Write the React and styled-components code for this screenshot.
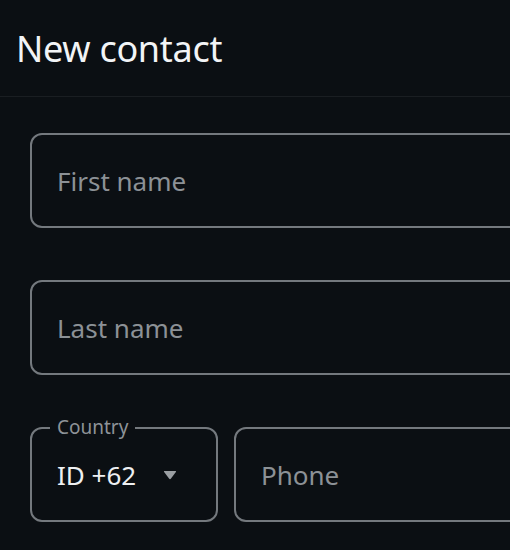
import styled, { createGlobalStyle } from "styled-components";

const GlobalStyle = createGlobalStyle`
  html, body {
    margin: 0;
    padding: 0;
    background: #0b0f13;
    overflow: hidden;
    font-family: "Noto Sans", "Open Sans", sans-serif;
  }
`;

export default function App() {
  return (
    <>
      <GlobalStyle />
      <Page>
        <Header>
          <Title>New contact</Title>
        </Header>
        <Form>
          <Field placeholder="First name" />
          <Field placeholder="Last name" />
          <PhoneRow>
            <Country>
              <CountryLabel>Country</CountryLabel>
              <CountryValue>ID +62</CountryValue>
              <Caret viewBox="0 0 14 10">
                <path d="M1.5 1 H12.5 Q13.6 1 12.9 2 L8 8.6 Q7 9.8 6 8.6 L1.1 2 Q0.4 1 1.5 1 Z" />
              </Caret>
            </Country>
            <Field placeholder="Phone" $narrow />
          </PhoneRow>
        </Form>
      </Page>
    </>
  );
}

const Page = styled.div`
  width: 510px;
  height: 550px;
  background: #0b0f13;
  overflow: hidden;
`;

const Header = styled.div`
  height: 96px;
  display: flex;
  align-items: center;
  padding: 0 16px;
  border-bottom: 1px solid #1a1e22;
`;

const Title = styled.h1`
  margin: 0;
  font-size: 36px;
  font-weight: 400;
  color: #f2f4f6;
  letter-spacing: -0.3px;
`;

const Form = styled.div`
  display: flex;
  flex-direction: column;
  gap: 52px;
  padding: 36px 0 0 30px;
`;

const Field = styled.input`
  box-sizing: border-box;
  width: ${(p) => (p.$narrow ? "320px" : "540px")};
  height: 95px;
  flex-shrink: 0;
  padding: 0 0 0 25px;
  background: transparent;
  border: 2px solid #74797e;
  border-radius: 12px;
  font-family: inherit;
  font-size: 26px;
  color: #eef0f2;
  outline: none;

  &::placeholder {
    color: #8c9196;
  }
`;

const PhoneRow = styled.div`
  display: flex;
  gap: 16px;
`;

const Country = styled.div`
  position: relative;
  box-sizing: border-box;
  width: 188px;
  height: 95px;
  flex-shrink: 0;
  display: flex;
  align-items: center;
  padding-left: 25px;
  border: 2px solid #74797e;
  border-radius: 12px;
`;

const CountryLabel = styled.span`
  position: absolute;
  top: -15px;
  left: 18px;
  padding: 0 7px;
  background: #0b0f13;
  font-size: 19px;
  color: #8e9398;
`;

const CountryValue = styled.span`
  font-size: 26px;
  color: #eef0f2;
`;

const Caret = styled.svg`
  width: 14px;
  height: 10px;
  margin-left: 27px;
  fill: #9a9ea2;
`;
